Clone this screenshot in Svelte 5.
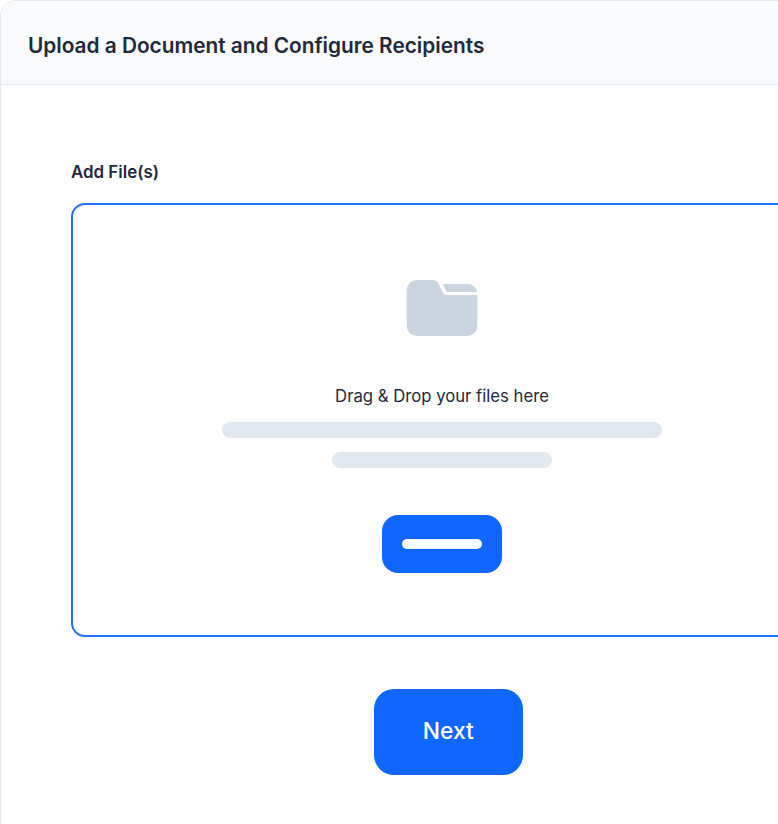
<script>
  const title = 'Upload a Document and Configure Recipients';
</script>

<div class="page">
  <section class="card">
    <header class="head"><h1>{title}</h1></header>
    <div class="body">
      <div class="label">Add File(s)</div>
      <div class="drop">
        <svg class="folder" width="72" height="58" viewBox="0 0 72 58" aria-hidden="true">
          <path d="M.700 11a10 10 0 0 1 10-10h15.300c3.400 0 5.600 1.600 7 4.500l4 8c.8 1.700 2 2.500 3.800 2.500H71.300v31a10 10 0 0 1-10 10H10.700a10 10 0 0 1-10-10z" fill="#cbd5e1"/>
          <path d="M36.700 5h25.300c4.600 0 8 3 9.200 8H41.500c-.7 0-1-.2-1.300-.8z" fill="#cbd5e1"/>
        </svg>
        <div class="drag">Drag &amp; Drop your files here</div>
        <div class="bar long"></div>
        <div class="bar short"></div>
        <div class="fake"><span></span></div>
      </div>
      <div class="actions"><button type="button">Next</button></div>
    </div>
  </section>
</div>

<style>
  :global(body) { margin: 0; background: #fff; overflow: hidden; }
  .page { width: 778px; height: 824px; overflow: hidden; font-family: Inter, "Noto Sans", sans-serif; }
  .card {
    box-sizing: border-box; width: 896px; height: 900px;
    border: 1px solid #e2e8f0; border-radius: 16px; background: #fff; overflow: hidden;
  }
  .head {
    box-sizing: border-box; height: 84px; padding: 6px 27px 0; display: flex; align-items: center;
    background: #f8fafc; border-bottom: 1px solid #e2e8f0;
  }
  h1 { margin: 0; font-size: 20.800px; line-height: 28px; font-weight: 600; color: #1e293b; white-space: nowrap; }
  .body { padding: 77px 0 0 70px; }
  .label { font-size: 16.900px; line-height: 20px; font-weight: 600; color: #1e293b; }
  .drop {
    box-sizing: border-box; width: 742px; height: 434px; margin-top: 21px;
    border: 2px solid #2570ff; border-radius: 14px;
    display: flex; flex-direction: column; align-items: center; padding-top: 74px;
  }
  .folder { display: block; }
  .drag { margin-top: 49px; font-size: 16.700px; line-height: 20px; color: #1e293b; }
  .bar { background: #e2e8f0; border-radius: 8px; height: 16px; }
  .long { width: 440px; margin-top: 16px; }
  .short { width: 220px; margin-top: 14px; }
  .fake {
    width: 120px; height: 58px; margin-top: 47px; border-radius: 16px; background: #0f67ff;
    display: flex; align-items: center; justify-content: center;
  }
  .fake span { width: 80px; height: 10px; border-radius: 5px; background: #fff; }
  .actions { width: 754.500px; display: flex; justify-content: center; margin-top: 51.500px; }
  button {
    width: 148.500px; height: 86.500px; border: 0; border-radius: 20px; background: #0f67ff; color: #fff;
    font: 500 22.800px/1 Inter, "Noto Sans", sans-serif; padding: 0 0 1px;
  }
</style>
